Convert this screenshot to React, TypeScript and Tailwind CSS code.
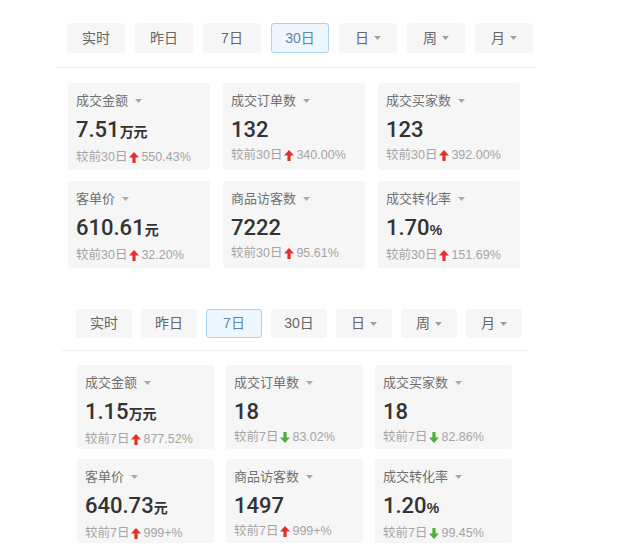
import React from 'react';

// ==========================================
// DATA
// ==========================================

type Metric = {
  label: string;
  value: string;
  unit?: string;
  delta: string;
  up: boolean;
};

const ranges = ['实时', '昨日', '7日', '30日', '日', '周', '月'];
const dropdownRanges = ['日', '周', '月'];

const monthMetrics: Metric[] = [
  { label: '成交金额', value: '7.51', unit: '万元', delta: '550.43%', up: true },
  { label: '成交订单数', value: '132', delta: '340.00%', up: true },
  { label: '成交买家数', value: '123', delta: '392.00%', up: true },
  { label: '客单价', value: '610.61', unit: '元', delta: '32.20%', up: true },
  { label: '商品访客数', value: '7222', delta: '95.61%', up: true },
  { label: '成交转化率', value: '1.70', unit: '%', delta: '151.69%', up: true },
];

const weekMetrics: Metric[] = [
  { label: '成交金额', value: '1.15', unit: '万元', delta: '877.52%', up: true },
  { label: '成交订单数', value: '18', delta: '83.02%', up: false },
  { label: '成交买家数', value: '18', delta: '82.86%', up: false },
  { label: '客单价', value: '640.73', unit: '元', delta: '999+%', up: true },
  { label: '商品访客数', value: '1497', delta: '999+%', up: true },
  { label: '成交转化率', value: '1.20', unit: '%', delta: '99.45%', up: false },
];

const FONT = "font-['Liberation_Sans','Noto_Sans_CJK_SC',sans-serif]";

// ==========================================
// PIECES
// ==========================================

function Caret() {
  return (
    <svg width="7" height="4" viewBox="0 0 7 4" className="ml-[7px] inline-block">
      <path d="M0 0 H7 L3.5 4 Z" fill="#aaaaaa" />
    </svg>
  );
}

function Arrow({ up }: { up: boolean }) {
  return (
    <svg
      width="10"
      height="11"
      viewBox="0 0 10 11"
      className={up ? 'mx-[2px] inline-block' : 'mx-[2px] inline-block rotate-180'}
    >
      <path d="M5 0 L10 5.5 H6.6 V11 H3.4 V5.5 H0 Z" fill={up ? '#e4302b' : '#4caf3c'} />
    </svg>
  );
}

function RangeButton({ label, active, wide }: { label: string; active: boolean; wide: boolean }) {
  const isDropdown = dropdownRanges.includes(label);
  return (
    <button
      className={
        (wide ? 'h-[30px] w-[58px] ' : 'h-[29px] w-[56px] ') +
        'flex items-center justify-center rounded-[3px] border text-[14px] ' +
        (active
          ? 'border-[#a8d3f3] bg-[#eef7fd] text-[#5b86ad]'
          : 'border-[#f6f6f6] bg-[#f6f6f6] text-[#666666]')
      }
    >
      {label}
      {isDropdown && (
        <svg width="7" height="4" viewBox="0 0 7 4" className="ml-[5px]">
          <path d="M0 0 H7 L3.5 4 Z" fill="#a0a0a0" />
        </svg>
      )}
    </button>
  );
}

function MetricCard({ m, period, tall }: { m: Metric; period: string; tall: boolean }) {
  return (
    <div className={(tall ? 'h-[87px] ' : 'h-[84px] ') + 'rounded-[3px] bg-[#f6f6f6] px-2 pt-[9px]'}>
      <div className="flex items-center text-[13px] leading-[18px] text-[#707070]">
        {m.label}
        <Caret />
      </div>
      <div className="mt-[6px] flex items-baseline leading-[28px] text-[#333333]">
        <span className="font-['Roboto',sans-serif] text-[22px] font-medium">{m.value}</span>
        {m.unit && <span className="text-[14px] font-bold">{m.unit}</span>}
      </div>
      <div className="mt-[2px] flex items-center text-[12.5px] leading-[18px] text-[#a5a5a5]">
        较前{period}
        <Arrow up={m.up} />
        {m.delta}
      </div>
    </div>
  );
}

function Section({
  active,
  metrics,
  period,
  large,
}: {
  active: string;
  metrics: Metric[];
  period: string;
  large: boolean;
}) {
  return (
    <section className={large ? 'ml-[55px] w-[482px]' : 'ml-[62px] w-[465px]'}>
      {/* Range switcher */}
      <div
        className={
          (large ? 'gap-[10px] pl-[12px] pb-[14px]' : 'gap-[9px] pl-[14px] pb-[12px]') +
          ' flex border-b border-[#eeeeee]'
        }
      >
        {ranges.map((r) => (
          <RangeButton key={r} label={r} active={r === active} wide={large} />
        ))}
      </div>

      {/* Metric cards */}
      <div
        className={
          large
            ? 'grid grid-cols-[repeat(3,142px)] gap-x-[13px] gap-y-[11px] pl-[13px] pt-[15px]'
            : 'grid grid-cols-[repeat(3,137px)] gap-x-[12px] gap-y-[10px] pl-[15px] pt-[14px]'
        }
      >
        {metrics.map((m) => (
          <MetricCard key={m.label} m={m} period={period} tall={large} />
        ))}
      </div>
    </section>
  );
}

// ==========================================
// APP
// ==========================================

export default function App() {
  return (
    <div className={FONT + ' h-[555px] w-[637px] overflow-hidden bg-white pt-[23px]'}>
      <Section active="30日" metrics={monthMetrics} period="30日" large />
      <div className="h-[41px]" />
      <Section active="7日" metrics={weekMetrics} period="7日" large={false} />
    </div>
  );
}
